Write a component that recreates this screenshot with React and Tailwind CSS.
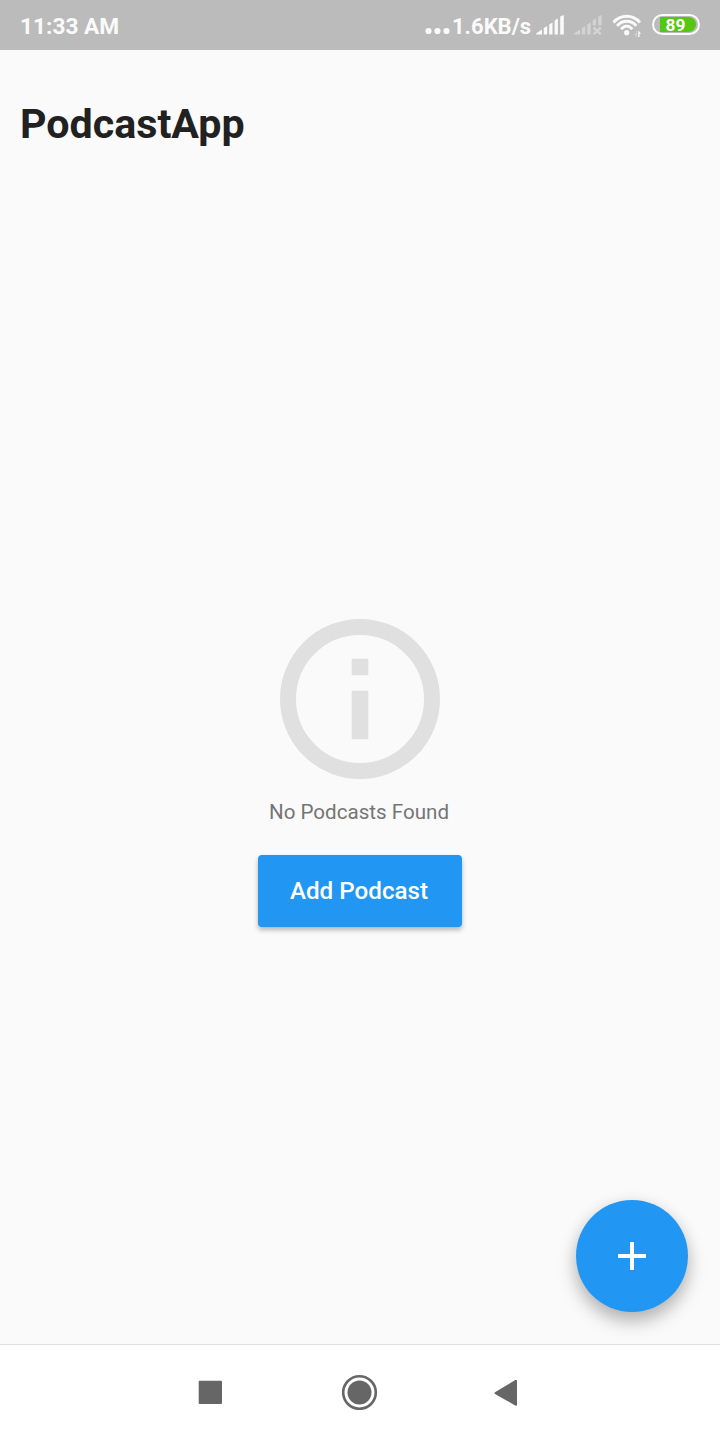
function SignalBars({ className }) {
  return (
    <svg viewBox="0 0 28 20" className={className} fill="currentColor">
      <path d="M0.300 19.500V18.300L6 14.500V19.500Z" />
      <path d="M7.800 13L11.200 11V19.500H7.800Z" />
      <path d="M13.200 9.500L16.500 7.500V19.500H13.200Z" />
      <path d="M18.600 5.500L21.900 3.500V19.500H18.600Z" />
      <path d="M24.200 1.500L27.800 0V19.500H24.200Z" />
    </svg>
  );
}

function NoSignal({ className }) {
  return (
    <svg viewBox="0 0 28 20" className={className} fill="currentColor">
      <path d="M0.300 19.500V18.300L6 14.500V19.500Z" />
      <path d="M7.800 13L11.300 11V19.500H7.800Z" />
      <path d="M13.200 9.500L16.700 7.500V19.500H13.200Z" />
      <path d="M18.700 5.500L21.900 3.500V10.300H18.700Z" />
      <path d="M24.300 1.500L27.700 0V10.300H24.300Z" />
      <path d="M19.500 12.500L26.800 19.300M26.800 12.500L19.500 19.300" stroke="currentColor" strokeWidth="2.4" />
    </svg>
  );
}

function Wifi({ className }) {
  return (
    <svg viewBox="0 0 30 24" className={className} fill="none" stroke="currentColor" strokeWidth="2.9">
      <path d="M1.500 8.500C8.500 0.200 20.900 0.200 27.900 8.500" />
      <path d="M5.100 11.900C10.200 5.600 19.200 5.600 24.300 11.900" />
      <path d="M9.200 15.300C12 11.100 17.400 11.100 20.200 15.300" />
      <circle cx="14.7" cy="18.700" r="2.6" fill="currentColor" stroke="none" />
      <path d="M24.500 17V22.500L22.300 19.500" strokeWidth="1.2" opacity=".3" />
      <path d="M26.200 23V16.200L29 19.800H27.500V23Z" fill="currentColor" stroke="none" />
    </svg>
  );
}

function StatusBar() {
  return (
    <header className="flex h-[50px] items-start bg-[#bbbbbb] pl-5 pr-5 font-bold text-[#fafafa]">
      <span className="mt-[13px] text-[22.7px] leading-[27px]">11:33 AM</span>
      <div className="ml-auto flex items-start">
        <svg viewBox="0 0 25 8" className="mt-[27px] h-2 w-[25px]" fill="currentColor">
          <circle cx="3.5" cy="4" r="3.1" />
          <circle cx="12.5" cy="4" r="3.1" />
          <circle cx="21.5" cy="4" r="3.1" />
        </svg>
        <span className="ml-[2px] mt-[13px] w-[80px] whitespace-nowrap text-[22px] leading-[27px]">1.6KB/s</span>
        <SignalBars className="ml-1 mt-[15px] h-5 w-7" />
        <NoSignal className="ml-[10px] mt-[15px] h-5 w-7 text-[#d3d3d3]" />
        <Wifi className="ml-[10px] mt-[14px] h-6 w-[30px]" />
        <div className="ml-[10px] mt-[14px] flex h-[21px] w-12 items-center rounded-full border-2 border-[#fafafa] bg-[#bbbbbb] pl-[6px] pr-[2px]">
          <div className="flex h-[15px] flex-1 items-center justify-center rounded-l-[2px] rounded-r-full bg-[#55c613] pr-[5px] pt-[2px] text-[17.3px] font-bold leading-none text-white">
            89
          </div>
        </div>
      </div>
    </header>
  );
}

export default function App() {
  return (
    <div className="flex h-[1440px] w-[720px] flex-col overflow-hidden bg-[#fafafa] font-['Roboto',sans-serif]">
      <StatusBar />
      <h1 className="mt-[50px] pl-5 text-[41.2px] font-bold leading-[48px] text-[#212121]">PodcastApp</h1>
      <main className="flex flex-1 flex-col items-center pt-[471px]">
        <svg viewBox="0 0 160 160" className="size-40 shrink-0" fill="#e0e0e0">
          <circle cx="80" cy="80" r="72" fill="none" stroke="#e0e0e0" strokeWidth="16" />
          <rect x="71.700" y="39.700" width="16.600" height="16.600" rx="1" />
          <rect x="71.700" y="71.700" width="16.600" height="48.600" rx="1" />
        </svg>
        <p className="mt-[21px] pr-[2px] text-[20.6px] leading-6 text-[#757575]">No Podcasts Found</p>
        <button className="mt-[31px] h-[72px] w-[204px] rounded-[4px] bg-[#2196f3] pr-[2px] text-[24.2px] font-medium text-white shadow-[0_3px_5px_rgba(0,0,0,0.28)]">
          Add Podcast
        </button>
        <button aria-label="Add" className="mb-8 mr-8 mt-auto flex size-28 items-center justify-center self-end rounded-full bg-[#2196f3] shadow-[0_10px_18px_rgba(0,0,0,0.25),0_2px_16px_rgba(0,0,0,0.08)]">
          <svg viewBox="0 0 28 28" className="size-7" fill="white">
            <path d="M12 0h4v12h12v4H16v12h-4V16H0v-4h12z" />
          </svg>
        </button>
      </main>
      <nav className="flex h-24 items-start border-t border-[#e0e0e0] bg-white pl-[198px] text-[#666666]">
        <svg viewBox="0 0 24 24" className="mt-[35px] size-6" fill="currentColor">
          <rect x=".7" y=".7" width="23.3" height="23.3" rx="1" />
        </svg>
        <svg viewBox="0 0 36 36" className="ml-[120px] mt-[29px] size-9" fill="currentColor">
          <circle cx="17.5" cy="18.500" r="12" />
          <circle cx="17.5" cy="18.500" r="16.300" fill="none" stroke="currentColor" strokeWidth="2.600" />
        </svg>
        <svg viewBox="0 0 24 28" className="ml-[116px] mt-[34px] h-7 w-6" fill="currentColor">
          <path d="M1 13.200L21.200 1.100Q23 .4 23 1.900V25.700Q23 27.400 21.200 26.400L1 15Q-.2 14.100 1 13.200Z" />
        </svg>
      </nav>
    </div>
  );
}
